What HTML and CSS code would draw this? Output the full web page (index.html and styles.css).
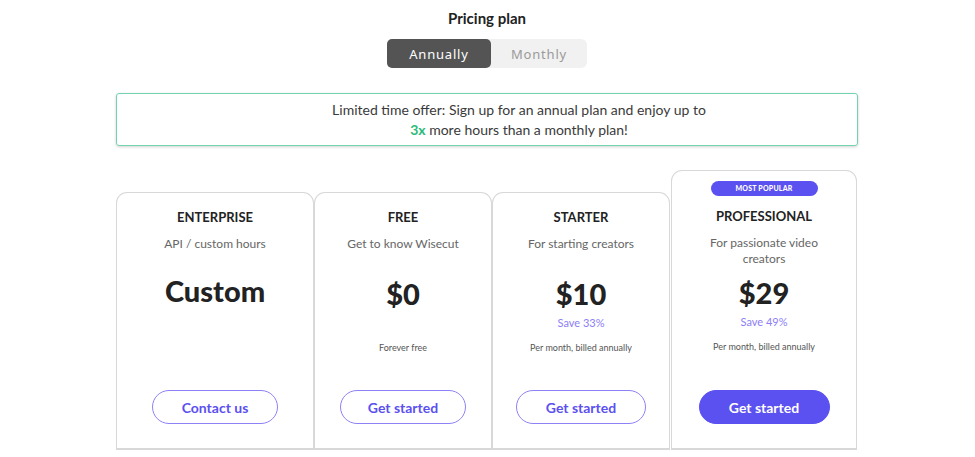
FILE: index.html
```html
<!DOCTYPE html>
<html lang="en">
<head>
    <meta charset="UTF-8">
    <meta name="viewport" content="width=device-width, initial-scale=1.0">
    <title>Pricing plan</title>
<link rel="stylesheet" href="styles.css">
</head>
<body>
    <div class="pricing">
        <h1 class="pricing-title">Pricing plan</h1>

        <div class="toggle">
            <button class="toggle-option active">Annually</button>
            <button class="toggle-option">Monthly</button>
        </div>

        <div class="offer">
            <p>Limited time offer: Sign up for an annual plan and enjoy up to<br>
            <strong class="green">3x</strong> more hours than a monthly plan!</p>
        </div>

        <div class="plans">
            <!-- Enterprise -->
            <div class="plan plan-enterprise">
                <h2 class="plan-name">ENTERPRISE</h2>
                <p class="plan-desc">API / custom hours</p>
                <div class="plan-price">Custom</div>
                <div class="plan-save"></div>
                <div class="plan-note"></div>
                <button class="plan-btn">Contact us</button>
            </div>

            <!-- Free -->
            <div class="plan">
                <h2 class="plan-name">FREE</h2>
                <p class="plan-desc">Get to know Wisecut</p>
                <div class="plan-price">$0</div>
                <div class="plan-save"></div>
                <div class="plan-note">Forever free</div>
                <button class="plan-btn">Get started</button>
            </div>

            <!-- Starter -->
            <div class="plan">
                <h2 class="plan-name">STARTER</h2>
                <p class="plan-desc">For starting creators</p>
                <div class="plan-price">$10</div>
                <div class="plan-save">Save 33%</div>
                <div class="plan-note">Per month, billed annually</div>
                <button class="plan-btn btn-starter">Get started</button>
            </div>

            <!-- Professional -->
            <div class="plan plan-popular">
                <span class="badge">MOST POPULAR</span>
                <h2 class="plan-name">PROFESSIONAL</h2>
                <p class="plan-desc">For passionate video<br>creators</p>
                <div class="plan-price">$29</div>
                <div class="plan-save">Save 49%</div>
                <div class="plan-note">Per month, billed annually</div>
                <button class="plan-btn btn-filled">Get started</button>
            </div>
        </div>
    </div>
</body>
</html>
```

FILE: styles.css
```css
/* General */
body {
    font-family: 'Lato', 'Open Sans', sans-serif;
    margin: 0;
    padding: 0 1px 0 0;
    background-color: #fff;
    color: #222;
}

.pricing {
    width: 742px;
    margin: 0 auto;
    padding-top: 8px;
    display: flex;
    flex-direction: column;
    align-items: center;
}

.pricing-title {
    margin: 0;
    font-size: 15px;
    line-height: 20px;
    font-weight: 700;
    color: #222;
}

/* Annually / Monthly switch */
.toggle {
    display: flex;
    width: 200px;
    height: 29px;
    margin-top: 11px;
    background-color: #f1f1f1;
    border-radius: 6px;
}

.toggle-option {
    font-family: 'Noto Sans', sans-serif;
    border: none;
    background: none;
    padding: 0;
    font-size: 13px;
    letter-spacing: 0.8px;
    color: #9a9a9a;
    border-radius: 5px;
    flex: 1;
    cursor: pointer;
}

.toggle-option.active {
    flex: 0 0 104px;
    background-color: #545454;
    color: #fff;
}

/* Offer banner */
.offer {
    box-sizing: border-box;
    width: 100%;
    height: 53px;
    margin-top: 25px;
    padding-left: 64px;
    border: 1.5px solid #72d3ae;
    border-radius: 3px;
    box-shadow: 0 1px 3px rgba(0, 0, 0, 0.18);
    display: flex;
    align-items: center;
    justify-content: center;
}

.offer p {
    margin: 0;
    text-align: center;
    font-size: 14px;
    line-height: 20px;
    font-weight: 400;
    color: #3a3a3a;
}

.green {
    color: #2bbb7a;
    font-weight: 700;
}

/* Plans */
.plans {
    display: flex;
    align-items: flex-end;
    width: 100%;
    margin-top: 24px;
}

.plan {
    box-sizing: border-box;
    width: 178px;
    height: 258px;
    padding: 16px 0 24px;
    border: 1px solid #d8d8d8;
    border-bottom-width: 2px;
    border-radius: 11px 11px 0 0;
    display: flex;
    flex-direction: column;
    align-items: center;
    text-align: center;
}

.plan-enterprise {
    width: 198px;
}

.plan-popular {
    width: 186px;
    height: 280px;
    margin-left: 1px;
    padding-top: 10px;
}

.badge {
    width: 107px;
    height: 15px;
    margin-bottom: 12px;
    border-radius: 8px;
    background-color: #5b50f0;
    color: #fff;
    font-size: 7px;
    font-weight: 900;
    line-height: 15px;
    letter-spacing: 0.2px;
}

.plan-name {
    margin: 0;
    font-size: 13px;
    line-height: 16px;
    font-weight: 700;
    color: #222;
}

.plan-desc {
    margin: 11px 0 0;
    height: 32px;
    font-size: 12px;
    line-height: 16px;
    color: #666;
}

.plan-price {
    margin-top: 8px;
    height: 36px;
    font-size: 29px;
    line-height: 36px;
    font-weight: 900;
    color: #222;
}

.plan-enterprise .plan-price {
    margin-top: 5px;
}

.plan-save {
    margin-top: 3px;
    height: 16px;
    font-size: 11px;
    line-height: 16px;
    color: #8c7ef6;
}

.plan-note {
    margin-top: 10px;
    height: 14px;
    font-size: 9px;
    line-height: 14px;
    color: #555;
}

/* Buttons */
.plan-btn {
    margin-top: auto;
    width: 126px;
    height: 34px;
    border: 1.5px solid #8d82f5;
    border-radius: 17px;
    background-color: #fff;
    color: #5b50f0;
    font-family: inherit;
    font-size: 14px;
    font-weight: 700;
    cursor: pointer;
}

.btn-starter {
    width: 130px;
}

.btn-filled {
    width: 131px;
    border-color: #5b50f0;
    background-color: #5b50f0;
    color: #fff;
}
```
